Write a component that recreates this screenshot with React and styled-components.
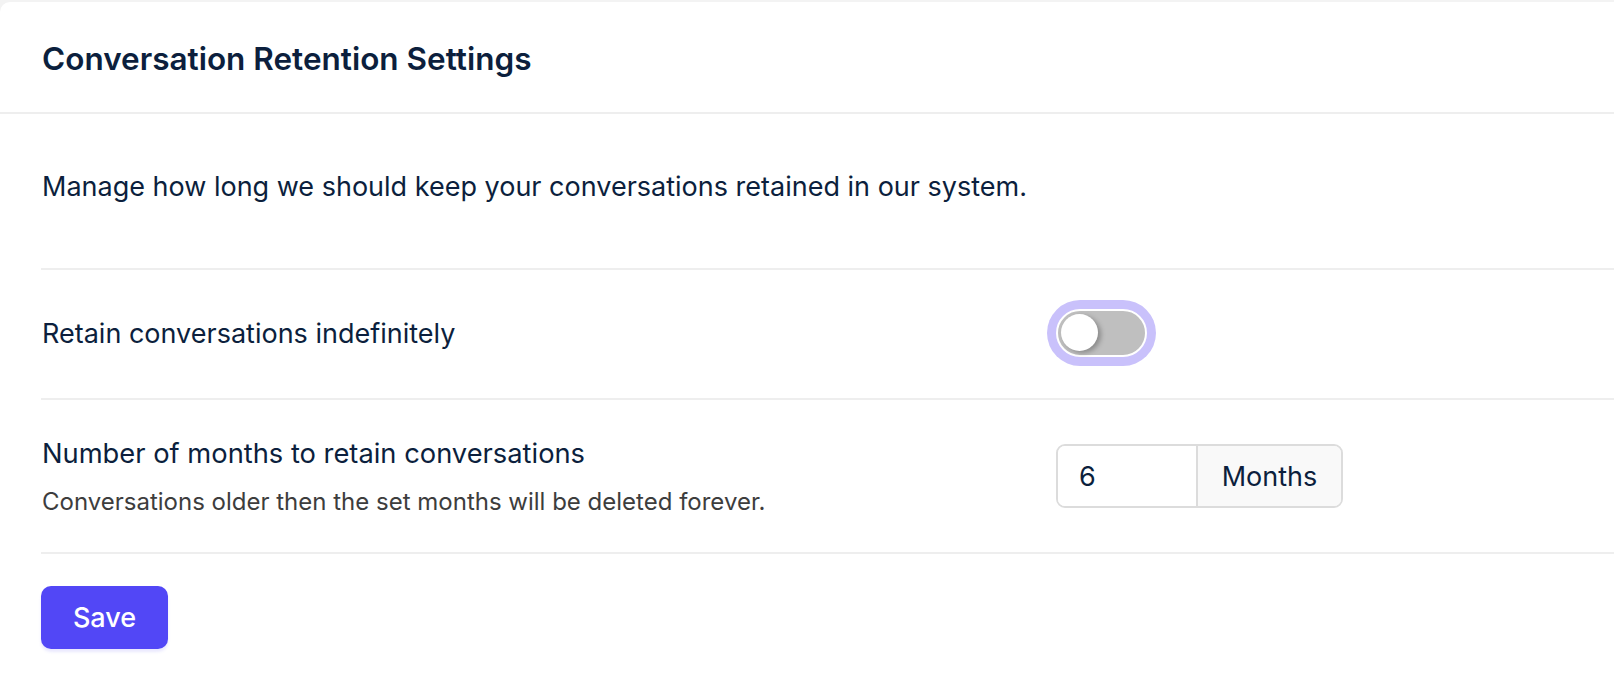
import React, { useState } from "react";
import styled, { createGlobalStyle } from "styled-components";

const GlobalStyle = createGlobalStyle`
  html, body {
    margin: 0;
    padding: 0;
    background: #f3f3f3;
    overflow: hidden;
  }
  body {
    font-family: Inter, "Noto Sans", Arial, sans-serif;
    color: #0c1f3d;
  }
`;

const Card = styled.div`
  margin-top: 2px;
  background: #ffffff;
  border-top-left-radius: 10px;
  min-height: 720px;
`;

const Header = styled.div`
  height: 110px;
  display: flex;
  align-items: center;
  padding-left: 42px;
  border-bottom: 2px solid #eeeeee;
`;

const Title = styled.h1`
  margin: 0;
  padding-top: 2px;
  font-size: 31.5px;
  font-weight: 600;
  color: #0c1f3d;
`;

const Body = styled.div`
  padding-left: 41px;
`;

const Description = styled.p`
  margin: 0;
  padding: 56px 0 64px 1px;
  font-size: 27px;
  line-height: 34px;
  border-bottom: 2px solid #eeeeee;
`;

const Row = styled.div`
  display: grid;
  grid-template-columns: 1015px 1fr;
  align-items: center;
  min-height: ${(p) => p.height}px;
  border-bottom: 2px solid #eeeeee;
`;

const Label = styled.div`
  padding-left: 1px;
  font-size: ${(p) => p.size || 27}px;
  line-height: 34px;
  color: #0c1f3d;
`;

const Hint = styled.div`
  margin-top: 16px;
  padding-left: 1px;
  font-size: 24px;
  line-height: 29px;
  color: #3d3d3d;
`;

const Toggle = styled.button`
  position: relative;
  width: 91px;
  height: 48px;
  padding: 0;
  border: 2px solid #ffffff;
  border-radius: 24px;
  background: ${(p) => (p.on ? "#5046f5" : "#bfbfbf")};
  box-shadow: 0 0 0 9px #c9c1fb;
  cursor: pointer;
`;

const Knob = styled.span`
  position: absolute;
  top: 3px;
  left: ${(p) => (p.on ? "47px" : "3px")};
  width: 37px;
  height: 37px;
  border-radius: 50%;
  background: #ffffff;
  box-shadow: 3px 2px 5px rgba(0, 0, 0, 0.28);
`;

const InputGroup = styled.div`
  display: flex;
  width: 287px;
  height: 64px;
  box-sizing: border-box;
  border: 2px solid #dcdcdc;
  border-radius: 9px;
  overflow: hidden;
`;

const NumberInput = styled.input`
  width: 140px;
  box-sizing: border-box;
  border: none;
  border-right: 2px solid #dcdcdc;
  padding: 0 0 0 21px;
  font-family: inherit;
  font-size: 27px;
  color: #0c1f3d;
  outline: none;
  background: #ffffff;
`;

const Addon = styled.div`
  flex: 1;
  display: flex;
  align-items: center;
  justify-content: center;
  background: #f9f9f9;
  font-size: 27px;
  color: #0c1f3d;
`;

const SaveButton = styled.button`
  margin-top: 32px;
  width: 127px;
  height: 63px;
  border: none;
  border-radius: 10px;
  background: #5247f6;
  color: #ffffff;
  font-family: inherit;
  font-size: 27px;
  font-weight: 500;
  box-shadow: 0 3px 3px rgba(82, 71, 246, 0.12);
  cursor: pointer;
`;

const App = () => {
  const [retain, setRetain] = useState(false);
  const [months, setMonths] = useState("6");

  return (
    <>
      <GlobalStyle />
      <Card>
        <Header>
          <Title>Conversation Retention Settings</Title>
        </Header>
        <Body>
          <Description>
            Manage how long we should keep your conversations retained in our system.
          </Description>
          <Row height={128}>
            <Label>Retain conversations indefinitely</Label>
            <div>
              <Toggle on={retain} onClick={() => setRetain(!retain)}>
                <Knob on={retain} />
              </Toggle>
            </div>
          </Row>
          <Row height={152}>
            <div>
              <Label size={27.3}>Number of months to retain conversations</Label>
              <Hint>Conversations older then the set months will be deleted forever.</Hint>
            </div>
            <div>
              <InputGroup>
                <NumberInput
                  value={months}
                  onChange={(e) => setMonths(e.target.value)}
                />
                <Addon>Months</Addon>
              </InputGroup>
            </div>
          </Row>
          <SaveButton>Save</SaveButton>
        </Body>
      </Card>
    </>
  );
};

export default App;
